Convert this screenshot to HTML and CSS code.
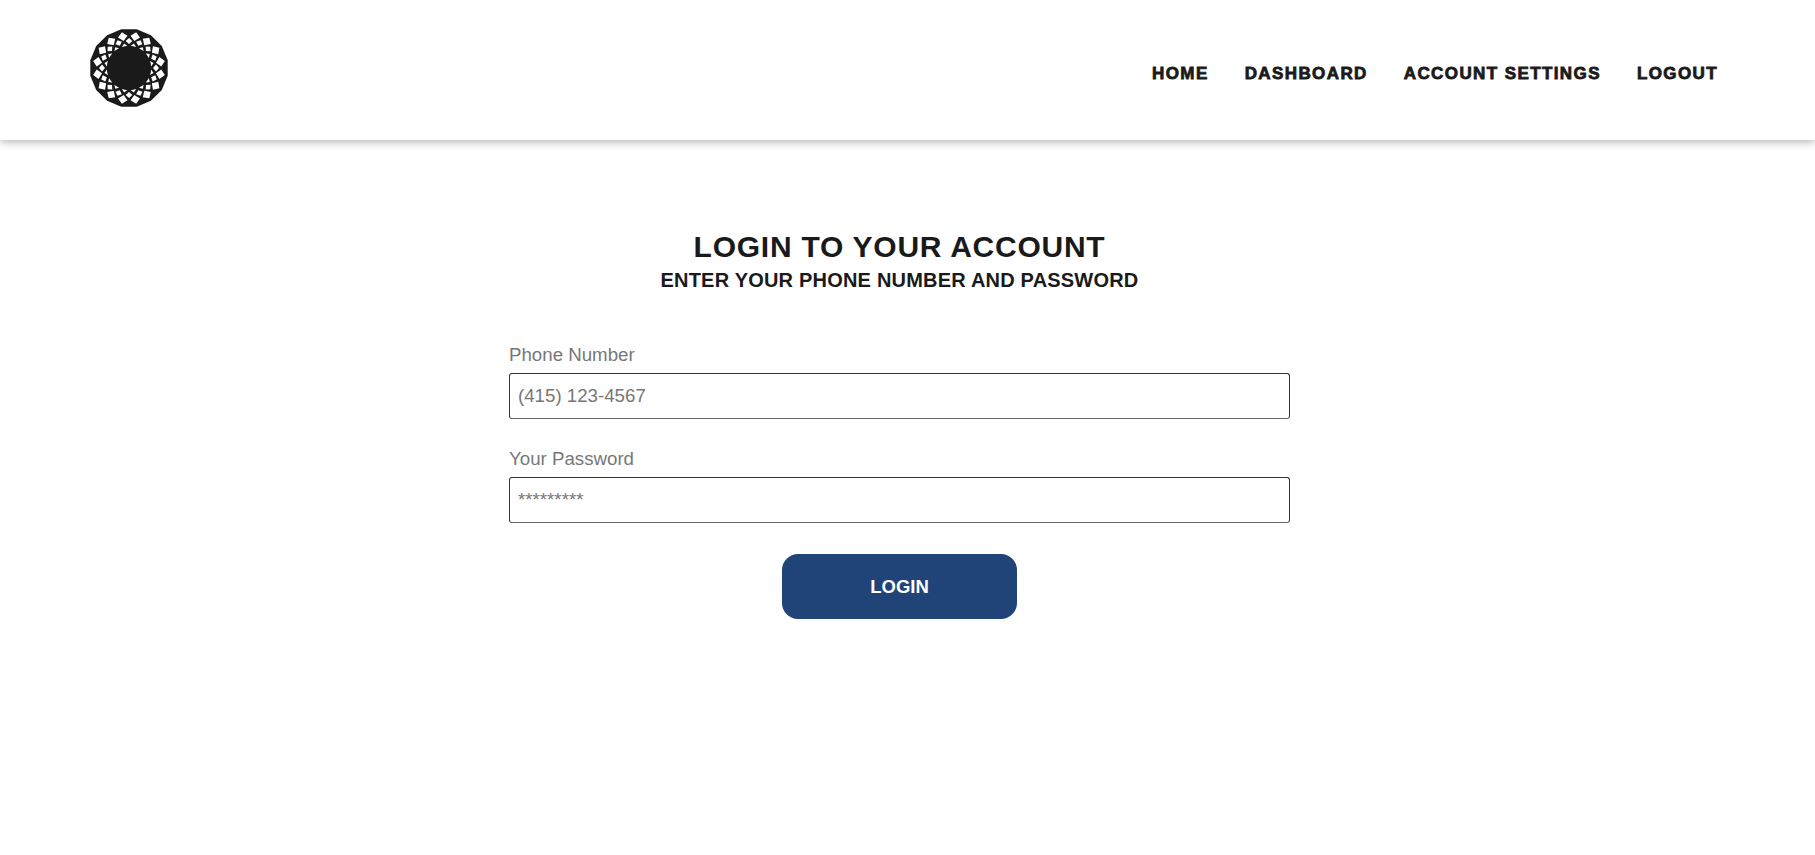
FILE: index.html
```html
<!DOCTYPE html>
<html>
<head>
  <meta charset="utf-8">
  <meta name="viewport" content="width=device-width, initial-scale=1">
  <title>Login</title>
  <link rel="stylesheet" href="styles.css">
</head>
<body>
  <header class="topbar">
    <a class="logo" href="#">
      <svg width="80" height="80" viewBox="-40 -40 80 80">
        <polygon fill="#1a1a1a" points="7.700,-38.700 21.900,-32.800 32.800,-21.900 38.700,-7.700 38.700,7.700 32.800,21.900 21.900,32.800 7.700,38.700 -7.700,38.700 -21.900,32.800 -32.800,21.900 -38.700,7.700 -38.700,-7.700 -32.800,-21.900 -21.900,-32.800 -7.700,-38.700"/>
        <defs>
          <g id="petal" fill="#fff">
            <path d="M0 -36.500 L4.800 -32 L0 -27.500 L-4.800 -32 Z" transform="rotate(11.25)"/>
            <path d="M0 -30 L3.400 -27 L0 -24 L-3.400 -27 Z"/>
            <path d="M0 -25 L2.800 -22 L-2.800 -22 Z" transform="rotate(11.25)"/>
          </g>
        </defs>
        <use href="#petal"/>
        <use href="#petal" transform="rotate(22.5)"/>
        <use href="#petal" transform="rotate(45)"/>
        <use href="#petal" transform="rotate(67.5)"/>
        <use href="#petal" transform="rotate(90)"/>
        <use href="#petal" transform="rotate(112.5)"/>
        <use href="#petal" transform="rotate(135)"/>
        <use href="#petal" transform="rotate(157.5)"/>
        <use href="#petal" transform="rotate(180)"/>
        <use href="#petal" transform="rotate(202.5)"/>
        <use href="#petal" transform="rotate(225)"/>
        <use href="#petal" transform="rotate(247.5)"/>
        <use href="#petal" transform="rotate(270)"/>
        <use href="#petal" transform="rotate(292.5)"/>
        <use href="#petal" transform="rotate(315)"/>
        <use href="#petal" transform="rotate(337.5)"/>
        <circle r="22" fill="#1a1a1a"/>
      </svg>
    </a>
    <nav class="menu">
      <a href="#">HOME</a>
      <a href="#">DASHBOARD</a>
      <a href="#">ACCOUNT SETTINGS</a>
      <a href="#">LOGOUT</a>
    </nav>
  </header>

  <main class="login">
    <h1>LOGIN TO YOUR ACCOUNT</h1>
    <h2>ENTER YOUR PHONE NUMBER AND PASSWORD</h2>
    <form class="login-form">
      <label for="phone">Phone Number</label>
      <input id="phone" type="text" placeholder="(415) 123-4567">
      <label for="password">Your Password</label>
      <input id="password" type="text" placeholder="*********">
      <button type="button">LOGIN</button>
    </form>
  </main>
</body>
</html>
```

FILE: styles.css
```css
html {font-family: "Liberation Sans", Arial, sans-serif; color: #1a1a1a;}
body {margin: 0; background: #fff;}

.topbar {
  display: flex;
  align-items: center;
  justify-content: space-between;
  height: 140px;
  padding: 0 97px 4px 89px;
  box-sizing: border-box;
  box-shadow: 0 2px 8px rgba(0, 0, 0, 0.3);
}
.logo {display: block; height: 80px;}
.menu {display: flex; gap: 36px; margin-top: 12px;}
.menu a {
  color: #1a1a1a;
  font-size: 17px;
  font-weight: 700;
  letter-spacing: 1.4px;
  text-decoration: none;
  -webkit-text-stroke: 0.8px #1a1a1a;
}

.login {width: 781px; margin: 90px auto 0; padding-right: 16px; text-align: center;}
h1 {font-size: 30px; line-height: 34px; margin: 0; letter-spacing: 0.75px;}
h2 {font-size: 20px; line-height: 24px; margin: 4px 0 0; letter-spacing: 0.2px;}

.login-form {display: flex; flex-direction: column; margin-top: 50px; text-align: left;}
label {color: #777; font-size: 18.7px; line-height: 26px; margin-bottom: 5px;}
input {
  height: 46px;
  box-sizing: border-box;
  padding: 0 8px;
  margin-bottom: 27px;
  border: 1px solid #333;
  border-bottom-color: #666;
  border-radius: 3px;
  font-family: inherit;
  font-size: 18.7px;
  color: #333;
}
input::placeholder {color: #777; opacity: 1;}
button {
  align-self: center;
  width: 235px;
  height: 65px;
  margin-top: 4px;
  border: 0;
  border-radius: 16px;
  background: #204478;
  color: #fff;
  font-family: inherit;
  font-size: 18.5px;
  font-weight: 700;
}
```
